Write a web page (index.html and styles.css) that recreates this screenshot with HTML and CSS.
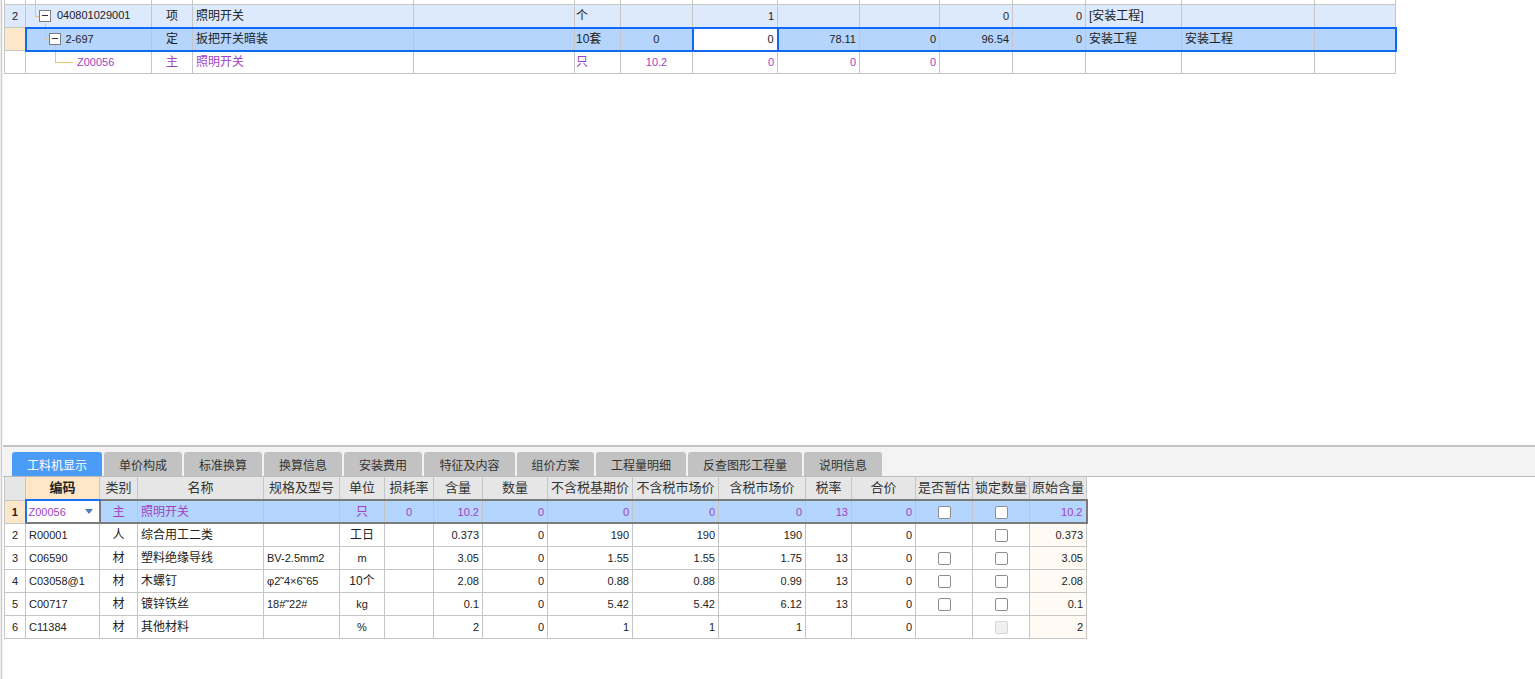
FILE: index.html
```html
<!DOCTYPE html>
<html lang="zh-CN">
<head>
<meta charset="utf-8">
<title>工料机</title>
<link rel="stylesheet" href="styles.css">
</head>
<body>
<div class="app">
  <div class="strip"></div>
  <div class="main">
    <div class="top">
      <table class="grid top-grid">
        <colgroup>
          <col style="width:21px"><col style="width:126px"><col style="width:41px"><col style="width:221px"><col style="width:161px"><col style="width:46px"><col style="width:72px"><col style="width:85px"><col style="width:82px"><col style="width:80px"><col style="width:73px"><col style="width:73px"><col style="width:96px"><col style="width:133px"><col style="width:81px">
        </colgroup>
        <tr class="r0">
          <td class="rn"></td>
          <td class="code"><div class="tree"><span class="ln v0"></span></div></td>
          <td></td><td></td><td></td><td></td><td></td><td></td><td></td><td></td><td></td><td></td><td></td><td></td><td></td>
        </tr>
        <tr class="r1">
          <td class="rn n">2</td>
          <td class="code"><div class="tree t1"><span class="ln v1a"></span><span class="ln h1"></span><span class="ln v1b"></span><span class="box"></span>040801029001</div></td>
          <td class="c">项</td>
          <td>照明开关</td>
          <td></td>
          <td class="u">个</td>
          <td></td>
          <td class="r">1</td>
          <td></td>
          <td></td>
          <td class="r">0</td>
          <td class="r">0</td>
          <td>[安装工程]</td>
          <td></td>
          <td></td>
        </tr>
        <tr class="sel">
          <td class="rn"></td>
          <td class="code first"><div class="tree t2"><span class="ln v2a"></span><span class="ln h2"></span><span class="ln v2b"></span><span class="box"></span>2-697</div></td>
          <td class="c">定</td>
          <td>扳把开关暗装</td>
          <td></td>
          <td class="u">10套</td>
          <td class="c n">0</td>
          <td class="r edit">0</td>
          <td class="r">78.11</td>
          <td class="r">0</td>
          <td class="r">96.54</td>
          <td class="r">0</td>
          <td>安装工程</td>
          <td>安装工程</td>
          <td class="last"></td>
        </tr>
        <tr class="main-row">
          <td class="rn"></td>
          <td class="code"><div class="tree t3"><span class="ln v3"></span><span class="ln h3"></span>Z00056</div></td>
          <td class="c">主</td>
          <td>照明开关</td>
          <td></td>
          <td class="u">只</td>
          <td class="c n">10.2</td>
          <td class="r">0</td>
          <td class="r">0</td>
          <td class="r">0</td>
          <td></td>
          <td></td>
          <td></td>
          <td></td>
          <td></td>
        </tr>
      </table>
    </div>
    <div class="panel">
      <div class="tabbar">
        <div class="tab active w90">工料机显示</div>
        <div class="tab w78">单价构成</div>
        <div class="tab w78">标准换算</div>
        <div class="tab w78">换算信息</div>
        <div class="tab w78">安装费用</div>
        <div class="tab w91">特征及内容</div>
        <div class="tab w77">组价方案</div>
        <div class="tab w90">工程量明细</div>
        <div class="tab w114">反查图形工程量</div>
        <div class="tab w78">说明信息</div>
      </div>
      <table class="grid bot-grid">
        <colgroup>
          <col style="width:21px"><col style="width:74px"><col style="width:38px"><col style="width:126px"><col style="width:76px"><col style="width:45px"><col style="width:49px"><col style="width:49px"><col style="width:65px"><col style="width:85px"><col style="width:86px"><col style="width:87px"><col style="width:46px"><col style="width:64px"><col style="width:57px"><col style="width:57px"><col style="width:57px">
        </colgroup>
        <tr class="head">
          <th></th><th class="hcode">编码</th><th>类别</th><th>名称</th><th>规格及型号</th><th>单位</th><th>损耗率</th><th>含量</th><th>数量</th><th>不含税基期价</th><th>不含税市场价</th><th>含税市场价</th><th>税率</th><th>合价</th><th>是否暂估</th><th>锁定数量</th><th>原始含量</th>
        </tr>
        <tr class="cur">
          <td class="rn n">1</td>
          <td class="code n"><div class="dd"><span>Z00056</span><span class="tri"></span></div></td>
          <td class="c">主</td>
          <td>照明开关</td>
          <td></td>
          <td class="c">只</td>
          <td class="c n">0</td>
          <td class="r">10.2</td>
          <td class="r">0</td>
          <td class="r">0</td>
          <td class="r">0</td>
          <td class="r">0</td>
          <td class="r">13</td>
          <td class="r">0</td>
          <td class="c"><span class="cb"></span></td>
          <td class="c"><span class="cb"></span></td>
          <td class="r last">10.2</td>
        </tr>
        <tr>
          <td class="rn n">2</td><td class="n">R00001</td><td class="c">人</td><td>综合用工二类</td><td></td><td class="c">工日</td><td></td><td class="r">0.373</td><td class="r">0</td><td class="r">190</td><td class="r">190</td><td class="r">190</td><td></td><td class="r">0</td><td></td><td class="c"><span class="cb"></span></td><td class="r orig">0.373</td>
        </tr>
        <tr>
          <td class="rn n">3</td><td class="n">C06590</td><td class="c">材</td><td>塑料绝缘导线</td><td class="n">BV-2.5mm2</td><td class="c n">m</td><td></td><td class="r">3.05</td><td class="r">0</td><td class="r">1.55</td><td class="r">1.55</td><td class="r">1.75</td><td class="r">13</td><td class="r">0</td><td class="c"><span class="cb"></span></td><td class="c"><span class="cb"></span></td><td class="r orig">3.05</td>
        </tr>
        <tr>
          <td class="rn n">4</td><td class="n">C03058@1</td><td class="c">材</td><td>木螺钉</td><td class="n">φ2˜4×6˜65</td><td class="c">10个</td><td></td><td class="r">2.08</td><td class="r">0</td><td class="r">0.88</td><td class="r">0.88</td><td class="r">0.99</td><td class="r">13</td><td class="r">0</td><td class="c"><span class="cb"></span></td><td class="c"><span class="cb"></span></td><td class="r orig">2.08</td>
        </tr>
        <tr>
          <td class="rn n">5</td><td class="n">C00717</td><td class="c">材</td><td>镀锌铁丝</td><td class="n">18#˜22#</td><td class="c n">kg</td><td></td><td class="r">0.1</td><td class="r">0</td><td class="r">5.42</td><td class="r">5.42</td><td class="r">6.12</td><td class="r">13</td><td class="r">0</td><td class="c"><span class="cb"></span></td><td class="c"><span class="cb"></span></td><td class="r orig">0.1</td>
        </tr>
        <tr>
          <td class="rn n">6</td><td class="n">C11384</td><td class="c">材</td><td>其他材料</td><td></td><td class="c n">%</td><td></td><td class="r">2</td><td class="r">0</td><td class="r">1</td><td class="r">1</td><td class="r">1</td><td></td><td class="r">0</td><td></td><td class="c"><span class="cb dis"></span></td><td class="r orig">2</td>
        </tr>
      </table>
    </div>
  </div>
</div>
</body>
</html>
```

FILE: styles.css
```css
* { box-sizing: border-box; }
html, body { margin: 0; padding: 0; background: #fff; overflow: hidden; }
body {
  width: 1535px;
  height: 679px;
  font-family: "Liberation Sans", "Noto Sans CJK SC", sans-serif;
  font-size: 12px;
  color: #222;
}
.app { display: flex; height: 679px; }
.strip {
  width: 3px;
  flex: none;
  background: linear-gradient(to right, #ededed 0 1px, #cdcdcd 1px 2px, #f3f3f3 2px 3px);
}
.main { flex: 1; display: flex; flex-direction: column; min-width: 0; }
.top { height: 445px; overflow: hidden; padding-left: 1px; flex: none; }

.grid { border-collapse: collapse; table-layout: fixed; }
.grid td, .grid th {
  border: 1px solid #c6c6c6;
  padding: 0 3px;
  height: 23px;
  line-height: 20px;
  white-space: nowrap;
  overflow: hidden;
  font-weight: normal;
}
.grid td.r, .grid td.n, .tree { font-size: 11px; }
.grid .c { text-align: center; }
.grid .r { text-align: right; }
.grid .u { padding-left: 1px; }
.grid .rn { text-align: center; padding: 0; }

/* top grid */
.top-grid { width: 1391px; margin-top: -19px; }
.top-grid tr.r1 td { background: #dde9fc; }
.top-grid tr.main-row td { color: #a23fc6; }
.top-grid td.code { padding: 0; position: relative; }
.tree { position: relative; height: 21px; line-height: 21px; }
.tree.t1 { padding-left: 31px; }
.tree.t2 { padding-left: 39px; }
.tree.t3 { padding-left: 51px; }
.ln { position: absolute; background: #f6c26e; }
.v0 { left: 9px; top: 0; width: 1px; height: 23px; }
.v1a { left: 9px; top: -2px; width: 1px; height: 14px; }
.h1 { left: 9px; top: 11px; width: 4px; height: 1px; }
.v1b { left: 19px; top: 18px; width: 1px; height: 6px; }
.v2a { left: 18px; top: -3px; width: 1px; height: 13px; }
.h2 { left: 18px; top: 10px; width: 4px; height: 1px; }
.v2b { left: 28px; top: 16px; width: 1px; height: 8px; }
.v3 { left: 29px; top: -2px; width: 1px; height: 12px; }
.h3 { left: 29px; top: 10px; width: 18px; height: 1px; }
.box {
  position: absolute;
  width: 12px;
  height: 12px;
  border: 1px solid #7d7d7d;
  background: #fff;
}
.t1 .box { left: 13px; top: 5px; }
.t2 .box { left: 22px; top: 4px; }
.box::after {
  content: "";
  position: absolute;
  left: 2px;
  top: 4px;
  width: 6px;
  height: 1px;
  background: #333;
}

.top-grid tr.sel td {
  background: #b5d5fd;
  border-top: 2px solid #0f69f5;
  border-bottom: 2px solid #0f69f5;
}
.top-grid tr.sel td.rn {
  background: #fde7cb;
  border-top: 1px solid #c6c6c6;
  border-bottom: 1px solid #c6c6c6;
}
.top-grid tr.sel td.first { border-left: 2px solid #0f69f5; }
.top-grid tr.sel td.last { border-right: 2px solid #0f69f5; }
.top-grid tr.sel td.edit {
  background: #fff;
  border-left: 2px solid #0f69f5;
  border-right: 2px solid #0f69f5;
}

/* bottom panel */
.panel { border-top: 2px solid #c3c3c3; flex: 1; }
.tabbar {
  height: 30px;
  padding: 5px 0 0 9px;
  background: #f3f3f3;
  border-bottom: 1px solid #bdbdbd;
  display: flex;
  gap: 2px;
}
.tab {
  height: 24px;
  background: #c2c2c2;
  color: #333;
  border-radius: 3px 3px 0 0;
  display: flex;
  align-items: center;
  justify-content: center;
  font-size: 12px;
  flex: none;
}
.tab.active { background: #4a9cf7; color: #fff; }
.w77 { width: 77px; }
.w78 { width: 78px; }
.w90 { width: 90px; }
.w91 { width: 91px; }
.w114 { width: 114px; }

.bot-grid { width: 1082px; margin-left: 1px; }
.bot-grid th {
  background: #e6e6e6;
  color: #333;
  font-size: 13px;
  text-align: center;
  border-top: 0;
  padding: 0 2px;
}
.bot-grid th.hcode {
  background: #fee6c6;
  font-weight: bold;
  color: #222;
  border-bottom: 2px solid #1a6ef5;
}
.bot-grid tr.cur td {
  background: #b4d5fd;
  color: #a23fc6;
  border-top: 2px solid #7b7b7b;
  border-bottom: 2px solid #7b7b7b;
}
.bot-grid tr.cur td.rn {
  background: #fde7cb;
  color: #222;
  font-weight: bold;
  border-top: 1px solid #c6c6c6;
  border-bottom: 1px solid #c6c6c6;
}
.bot-grid tr.cur td.code {
  background: #fff;
  border-left: 2px solid #1a6ef5;
  border-top: 2px solid #1a6ef5;
  border-right: 2px solid #7b7b7b;
  padding: 0 1px 0 2px;
}
.bot-grid tr.cur td.last { border-right: 2px solid #7b7b7b; }
.bot-grid td.orig { background: #fffaf4; }
.dd { display: flex; align-items: center; justify-content: space-between; padding-right: 5px; }
.tri {
  width: 0;
  height: 0;
  border-left: 4px solid transparent;
  border-right: 4px solid transparent;
  border-top: 5px solid #4d7fbd;
}
.cb {
  display: inline-block;
  width: 13px;
  height: 13px;
  border: 1px solid #8d8d8d;
  border-radius: 2px;
  background: #fff;
  vertical-align: middle;
}
.cb.dis { border-color: #d6d6d6; background: #f0f0f0; }
```
